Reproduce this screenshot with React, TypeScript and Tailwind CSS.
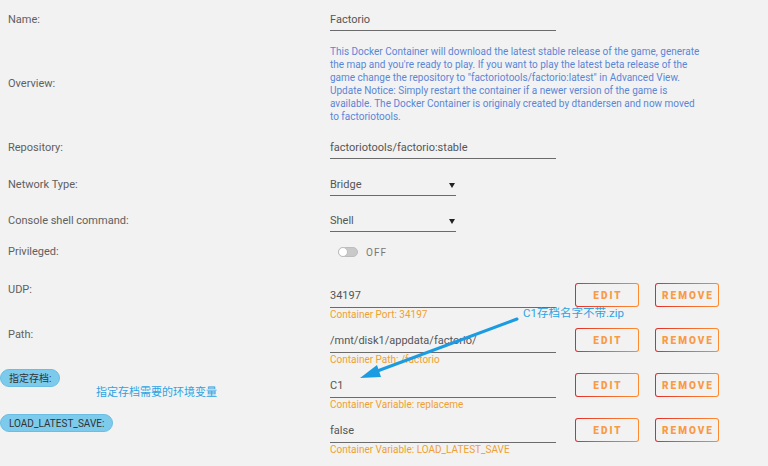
import React from 'react';

const font = { fontFamily: 'Roboto, "Noto Sans CJK SC", sans-serif' };

const Value: React.FC<{ text: string; w?: string; select?: boolean }> = ({ text, w = 'w-[226px]', select }) => (
  <div className={`${w} flex items-center justify-between border-b border-[#6b6b6b] pb-[2px] text-[11px] leading-4 text-[#555]`}>
    <span>{text}</span>
    {select && (
      <svg width="6" height="6" viewBox="0 0 6 6" className="mr-[1px]">
        <polygon points="0,1 6,1 3,6" fill="#222" />
      </svg>
    )}
  </div>
);

const GradButton: React.FC<{ label: string }> = ({ label }) => (
  <div className="w-[64px] h-[24px] rounded-[3px] p-[1px] bg-gradient-to-r from-[#e22828] to-[#ff8c2f]">
    <div className="w-full h-full rounded-[2px] bg-[#f2f2f2] flex items-center justify-center text-[10px] font-black tracking-[2px] pl-[2px] text-[#f99a45]">
      {label}
    </div>
  </div>
);

interface PortRowProps {
  label: React.ReactNode;
  value: string;
  caption: string;
}

const PortRow: React.FC<PortRowProps> = ({ label, value, caption }) => (
  <div className="h-[45px] flex items-start">
    <div className="w-[330px] shrink-0">{label}</div>
    <div className="mt-[23px] w-[226px]">
      <div className="border-b border-[#6b6b6b] pb-[3px] text-[11px] leading-4 text-[#555]">{value}</div>
      <div className="text-[10px] leading-[13px] text-[#f0a030] whitespace-nowrap">{caption}</div>
    </div>
    <div className="mt-[18px] ml-[19px] flex gap-[16px]">
      <GradButton label="EDIT" />
      <GradButton label="REMOVE" />
    </div>
  </div>
);

const Label: React.FC<{ text: string; className?: string }> = ({ text, className = '' }) => (
  <div className={`pl-2 text-[11px] leading-4 text-[#606060] ${className}`}>{text}</div>
);

const Pill: React.FC<{ text: string }> = ({ text }) => (
  <div className="mt-[14px] inline-flex h-[18px] items-center rounded-full bg-[#7dcbec] border border-[#6bbde2] pl-2 pr-[8px] text-[10px] text-[#333]">
    {text}
  </div>
);

export default function App() {
  return (
    <div className="relative w-[768px] h-[466px] overflow-hidden bg-[#f2f2f2] pt-[1px]" style={font}>
      {/* Name */}
      <div className="h-[38px] pt-[11px] flex items-start">
        <Label text="Name:" className="w-[330px] shrink-0" />
        <Value text="Factorio" />
      </div>

      {/* Overview */}
      <div className="h-[93px] pt-[6px] flex items-start">
        <div className="w-[330px] shrink-0 h-[78px] flex items-center">
          <Label text="Overview:" />
        </div>
        <p className="w-[372px] text-[10px] leading-[13px] text-[#5b86d6]">
          This Docker Container will download the latest stable release of the game, generate the map and you're ready to
          play. If you want to play the latest beta release of the game change the repository to
          "factoriotools/factorio:latest" in Advanced View. Update Notice: Simply restart the container if a newer version
          of the game is available. The Docker Container is originaly created by dtandersen and now moved to factoriotools.
        </p>
      </div>

      {/* Repository */}
      <div className="h-[37px] pt-[8px] flex items-start">
        <Label text="Repository:" className="w-[330px] shrink-0" />
        <Value text="factoriotools/factorio:stable" />
      </div>

      {/* Network Type */}
      <div className="h-[36px] pt-[8px] flex items-start">
        <Label text="Network Type:" className="w-[330px] shrink-0" />
        <Value text="Bridge" w="w-[126px]" select />
      </div>

      {/* Console shell */}
      <div className="h-[36px] pt-[8px] flex items-start">
        <Label text="Console shell command:" className="w-[330px] shrink-0" />
        <Value text="Shell" w="w-[126px]" select />
      </div>

      {/* Privileged */}
      <div className="h-[24px] pb-[2px] flex items-center">
        <Label text="Privileged:" className="w-[330px] shrink-0" />
        <div className="flex items-center gap-[8px] pl-[8px]">
          <div className="relative w-[20px] h-[10px] rounded-full bg-[#c9c9c9] border border-[#bdbdbd]">
            <div className="absolute left-[-1px] top-[-1px] w-[10px] h-[10px] rounded-full bg-white border border-[#bdbdbd]" />
          </div>
          <span className="text-[10px] tracking-[1px] text-[#777]">OFF</span>
        </div>
      </div>

      <PortRow label={<Label text="UDP:" className="mt-[17px]" />} value="34197" caption="Container Port: 34197" />
      <PortRow label={<Label text="Path:" className="mt-[17px]" />} value="/mnt/disk1/appdata/factorio/" caption="Container Path: /factorio" />
      <PortRow label={<Pill text="指定存档:" />} value="C1" caption="Container Variable: replaceme" />
      <PortRow label={<Pill text="LOAD_LATEST_SAVE:" />} value="false" caption="Container Variable: LOAD_LATEST_SAVE" />

      {/* annotations */}
      <div className="absolute left-[96px] top-[385px] text-[11px] leading-4 text-[#2ea3e3]">指定存档需要的环境变量</div>
      <div className="absolute left-[523px] top-[305px] text-[11.5px] leading-4 text-[#2ea3e3]">C1存档名字不带.zip</div>
      <svg className="absolute left-0 top-0 pointer-events-none" width="768" height="466">
        <line x1="517" y1="319" x2="372" y2="373" stroke="#1b9ce2" strokeWidth="3" strokeLinecap="round" />
        <polygon points="360,378 377,365 381,377" fill="#1b9ce2" />
      </svg>
    </div>
  );
}
